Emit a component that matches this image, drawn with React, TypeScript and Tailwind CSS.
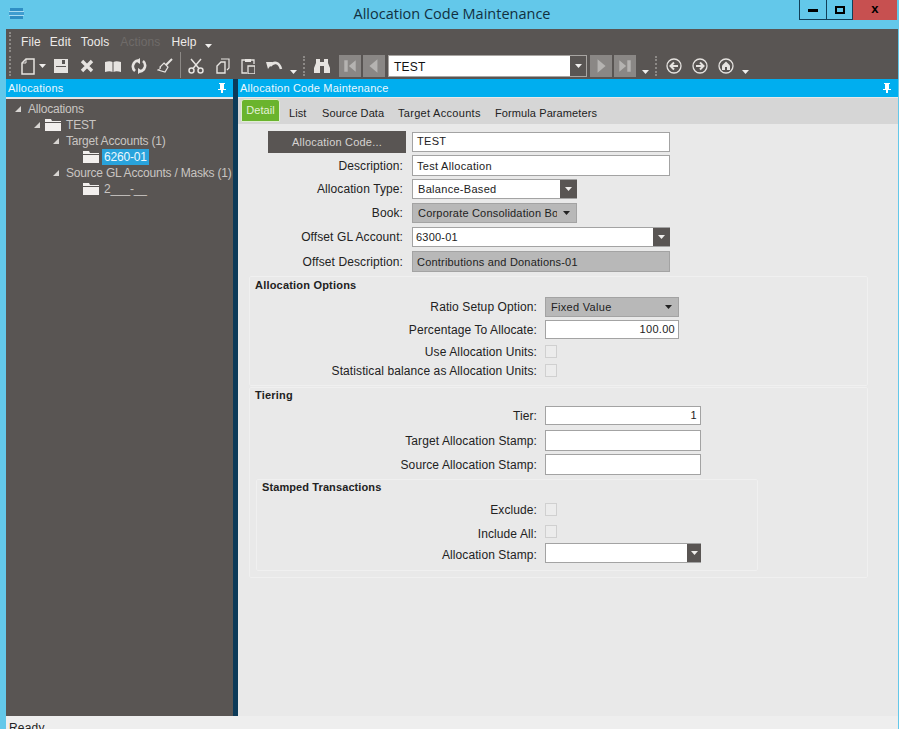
import React from 'react';

const Caret = ({ className = '' }: { className?: string }) => (
  <svg width="7" height="4" viewBox="0 0 7 4" className={className}>
    <path d="M0 0h7L3.5 4z" fill="#f0eeec" />
  </svg>
);

const Grip = ({ className = '' }: { className?: string }) => (
  <div className={`w-[2px] h-[20px] shrink-0 border-l-2 border-dotted border-[#8c8986] ${className}`} />
);

const Icon = ({ className = '', w = 16, h = 16, children }: { className?: string; w?: number; h?: number; children: React.ReactNode }) => (
  <svg width={w} height={h} viewBox={`0 0 ${w} ${h}`} fill="none" stroke="#e6e3e0" strokeWidth="1.5" className={`shrink-0 ${className}`}>
    {children}
  </svg>
);

const NavBtn = ({ className = '', children }: { className?: string; children: React.ReactNode }) => (
  <div className={`w-[22px] h-[22px] shrink-0 bg-[#8a8785] flex items-center justify-center ${className}`}>
    <svg width="16" height="16" viewBox="0 0 14 14" fill="#b5b3b1">{children}</svg>
  </div>
);

const Folder = ({ className = '' }: { className?: string }) => (
  <svg width="16" height="12" viewBox="0 0 16 12" className={`shrink-0 ${className}`}>
    <path d="M0 0h6l1 2h9v1H0z" fill="#f2efed" />
    <path d="M0 4h16v8H0z" fill="#f2efed" />
  </svg>
);

const Tri = ({ className = '' }: { className?: string }) => (
  <svg width="6" height="6" viewBox="0 0 6 6" className={`shrink-0 ${className}`}>
    <path d="M6 0v6H0z" fill="#d8d5d2" />
  </svg>
);

const Row = ({ className = '', label, labelW, labelClass = '', children }: { className?: string; label: string; labelW: string; labelClass?: string; children: React.ReactNode }) => (
  <div className={`flex items-center ${className}`}>
    <div className={`${labelW} shrink-0 text-right text-[#222] tracking-[0.1px] whitespace-nowrap ${labelClass}`}>{label}</div>
    {children}
  </div>
);

const TextBox = ({ className = '', value = '', right = false }: { className?: string; value?: string; right?: boolean }) => (
  <div className={`bg-white border border-[#a3a3a3] flex items-center px-[4px] text-[11px] tracking-[0.3px] text-[#222] ${right ? 'justify-end' : ''} ${className}`}>{value}</div>
);

const DarkDrop = ({ className = '' }: { className?: string }) => (
  <div className={`bg-[#595553] h-full flex items-center justify-center shrink-0 ${className}`}>
    <Caret />
  </div>
);

const Check = ({ className = '' }: { className?: string }) => (
  <div className={`w-[12px] h-[13px] ml-[8px] border border-[#d0d0d0] bg-[#ececec] ${className}`} />
);

export default function App() {
  return (
    <div className="h-[729px] w-[899px] overflow-hidden bg-[#63c8ea] flex flex-col font-['Liberation_Sans',Arial,sans-serif] text-[12px] tracking-[0.2px]">
      {/* title bar */}
      <div className="h-[29px] shrink-0 flex items-start relative">
        <svg width="15" height="11" viewBox="0 0 15 11" className="mt-[8px] ml-[9px]">
          <path d="M1 0h13v3H1z" fill="#2f8fc4" />
          <path d="M0 4h15v3H0z" fill="#3f9dd0" />
          <path d="M1 8h13v3H1z" fill="#2f8fc4" />
          <path d="M0 3.500h15M0 7.500h15" stroke="#a9dcf2" strokeWidth="1" />
        </svg>
        <div className="absolute inset-x-0 top-[5px] pl-[5px] text-center text-[14.5px] tracking-normal text-[#12303f] font-['Open_Sans',sans-serif] leading-[18px]">
          Allocation Code Maintenance
        </div>
        <div className="ml-auto mr-[2px] flex h-[20px] relative">
          <div className="w-[28px] border border-t-0 border-[#123f58] flex items-center justify-center">
            <div className="w-[10px] h-[3px] bg-black mt-[2px]" />
          </div>
          <div className="w-[26px] border-b border-r border-[#123f58] flex items-center justify-center">
            <div className="w-[10px] h-[8px] border-2 border-black" />
          </div>
          <div className="w-[44px] bg-[#c75050] flex items-center justify-center text-[13px] font-bold text-black leading-none pb-[3px]">x</div>
        </div>
      </div>

      <div className="flex-1 min-h-0 ml-[6px] mr-[1px] flex flex-col">
        {/* menu bar */}
        <div className="h-[24px] shrink-0 bg-[#595553] flex items-center text-[#eeebe9] pt-[2px] tracking-[0.1px]">
          <Grip className="ml-[3px]" />
          <span className="ml-[10px]">File</span>
          <span className="ml-[9px]">Edit</span>
          <span className="ml-[10px]">Tools</span>
          <span className="ml-[11px] text-[#6f6b69]">Actions</span>
          <span className="ml-[11px]">Help</span>
          <Caret className="ml-[8px] mt-[8px]" />
        </div>

        {/* toolbar */}
        <div className="h-[26px] shrink-0 bg-[#595553] flex items-center">
          <Grip className="ml-[3px]" />
          <Icon className="ml-[10px]" w={14} h={17}>
            <path d="M5 1h8v15H1V5z" />
            <path d="M5 1v4H1" strokeWidth="1" />
          </Icon>
          <Caret className="ml-[4px]" />
          <Icon className="ml-[7px]">
            <path d="M1 1h14v14H1z" fill="#e6e3e0" stroke="none" />
            <path d="M9 2h3v4H9z" fill="#595553" stroke="none" />
            <path d="M3 8h10v1H3z" fill="#595553" stroke="none" />
          </Icon>
          <Icon className="ml-[11px]" w={14} h={14}>
            <path d="M2 2l10 10M12 2L2 12" strokeWidth="3.4" />
          </Icon>
          <Icon className="ml-[11px]">
            <path d="M0 4c3-1 6-1 7.500 0v10C6 13 3 13 0 14zM16 4c-3-1-6-1-7.500 0v10c1.500-1 4.500-1 7.500 0z" fill="#e6e3e0" stroke="none" />
          </Icon>
          <Icon className="ml-[10px]">
            <path d="M7 2.500A6 6 0 0 0 4 13M9 13.500A6 6 0 0 0 12 3" strokeWidth="2.600" />
            <path d="M9 0v6L4.500 3zM7 10v6l4.500-3z" fill="#e6e3e0" stroke="none" />
          </Icon>
          <Icon className="ml-[10px]">
            <path d="M15 1L9 7" strokeWidth="2" />
            <path d="M7 5l4 4-3 5-7-2c2-1 3-2 2-3z" strokeWidth="1.200" />
          </Icon>
          <div className="w-[1px] h-[26px] bg-[#8c8986] ml-[7px] mb-[2px]" />
          <Icon className="ml-[7px]">
            <circle cx="3.500" cy="12.500" r="2.500" />
            <circle cx="12.500" cy="12.500" r="2.500" />
            <path d="M5 10.500L13 1M11 10.500L3 1" />
          </Icon>
          <Icon className="ml-[12px]" w={14} h={16}>
            <path d="M5 1h8v9l-2 2" strokeWidth="1.200" />
            <path d="M5 4h4v11H1V8z" strokeWidth="1.400" />
          </Icon>
          <Icon className="ml-[11px]" w={14} h={16}>
            <path d="M4 2H1v13h5M10 2h3v4" strokeWidth="1.300" />
            <path d="M4 1h6v3H4z" fill="#e6e3e0" stroke="none" />
            <path d="M7 8h7v8H7z" strokeWidth="1.300" />
          </Icon>
          <Icon className="ml-[11px]" w={17} h={12}>
            <path d="M4 6c4-5 9-4 11 3" strokeWidth="2.600" />
            <path d="M0 2l7 0-5 7z" fill="#e6e3e0" stroke="none" />
          </Icon>
          <Caret className="ml-[7px] mt-[11px]" />
          <Grip className="ml-[6px]" />
          <Icon className="ml-[9px]" w={16} h={14}>
            <path d="M2 0h4v3h4V0h4v4l2 5v5h-6V7H6v7H0V9l2-5z" fill="#e6e3e0" stroke="none" />
          </Icon>
          <NavBtn className="ml-[9px]">
            <path d="M2 2h3v10H2zM12 2v10L6 7z" />
          </NavBtn>
          <NavBtn className="ml-[2px]">
            <path d="M10 1v12L3 7z" />
          </NavBtn>
          <div className="ml-[3px] h-[22px] w-[199px] shrink-0 border border-[#a8a5a2] flex items-center">
            <div className="flex-1 h-full bg-white text-[#111] flex items-center pl-[5px] pt-[1px]">TEST</div>
            <DarkDrop className="w-[16px]" />
          </div>
          <NavBtn className="ml-[3px]">
            <path d="M4 1v12l7-6z" />
          </NavBtn>
          <NavBtn className="ml-[2px]">
            <path d="M2 2v10l6-5zM9 2h3v10H9z" />
          </NavBtn>
          <Caret className="ml-[6px] mt-[11px]" />
          <Grip className="ml-[6px]" />
          <Icon className="ml-[9px]">
            <circle cx="8" cy="8" r="7" strokeWidth="1.300" />
            <path d="M12 8H5M8 4.500L4.500 8 8 11.500" strokeWidth="2" />
          </Icon>
          <Icon className="ml-[10px]">
            <circle cx="8" cy="8" r="7" strokeWidth="1.300" />
            <path d="M4 8h7M8 4.500L11.500 8 8 11.500" strokeWidth="2" />
          </Icon>
          <Icon className="ml-[10px]">
            <circle cx="8" cy="8" r="7" strokeWidth="1.300" />
            <path d="M8 3.500L12 7.500v4.500H4V7.500z" fill="#e6e3e0" stroke="none" />
            <path d="M7 9h2v3H7z" fill="#595553" stroke="none" />
          </Icon>
          <Caret className="ml-[8px] mt-[11px]" />
        </div>

        {/* panes */}
        <div className="flex-1 min-h-0 flex">
          <div className="w-[227px] shrink-0 flex flex-col">
            <div className="h-[18px] shrink-0 bg-[#00aeef] flex items-center text-[11px] text-[#eaf7fd] pl-[2px] pr-[7px]">
              <span>Allocations</span>
              <svg width="8" height="10" viewBox="0 0 8 10" className="ml-auto">
                <path d="M1 0h6v1H6v5h2v1H5v3H3V7H0V6h2V1H1z" fill="#fff" />
              </svg>
            </div>
            <div className="flex-1 bg-[#595553] border-t-2 border-[#e4e4e4] pt-[2px] text-[#c9c5c2] tracking-[-0.2px] whitespace-nowrap">
              <div className="h-[16px] flex items-center"><Tri className="ml-[9px]" /><span className="ml-[7px]">Allocations</span></div>
              <div className="h-[16px] flex items-center"><Tri className="ml-[28px]" /><Folder className="ml-[5px]" /><span className="ml-[5px]">TEST</span></div>
              <div className="h-[16px] flex items-center"><Tri className="ml-[47px]" /><span className="ml-[7px]">Target Accounts (1)</span></div>
              <div className="h-[16px] flex items-center">
                <Folder className="ml-[77px]" />
                <span className="ml-[3px] px-[2px] bg-[#29a3dc] text-[#eef8fc] leading-[16px]">6260-01</span>
              </div>
              <div className="h-[16px] flex items-center"><Tri className="ml-[47px]" /><span className="ml-[7px]">Source GL Accounts / Masks (1)</span></div>
              <div className="h-[16px] flex items-center"><Folder className="ml-[77px]" /><span className="ml-[5px]">2___-__</span></div>
            </div>
          </div>

          <div className="w-[5px] shrink-0 bg-[#0c3a58]" />

          <div className="flex-1 min-w-0 flex flex-col">
            <div className="h-[18px] shrink-0 bg-[#00aeef] flex items-center text-[11px] text-[#eaf7fd] pl-[2px] pr-[7px]">
              <span>Allocation Code Maintenance</span>
              <svg width="8" height="10" viewBox="0 0 8 10" className="ml-auto">
                <path d="M1 0h6v1H6v5h2v1H5v3H3V7H0V6h2V1H1z" fill="#fff" />
              </svg>
            </div>

            {/* tabs */}
            <div className="h-[27px] shrink-0 bg-[#d6d6d6] border-t border-[#e8e8e8] flex items-start text-[11px] tracking-[0.1px] text-[#222]">
              <div className="ml-[3px] mt-[1px] h-[23px] w-[39px] bg-[#6ab42d] border border-[#dfeed2] rounded-t-[3px] flex items-center justify-center text-[#e4f1d8]">Detail</div>
              <div className="ml-[9px] mt-[7px] w-[33px]">List</div>
              <div className="mt-[7px] w-[76px]">Source Data</div>
              <div className="mt-[7px] w-[97px] tracking-[0.3px]">Target Accounts</div>
              <div className="mt-[7px]">Formula Parameters</div>
            </div>

            {/* form */}
            <div className="flex-1 min-h-0 bg-[#e9e9e9] pt-[7px]">
              <div className="flex items-center h-[21px]">
                <div className="ml-[30px] w-[138px] h-[22px] pt-[1px] bg-[#595553] text-[11px] text-[#d6d3d1] flex items-center justify-center">Allocation Code...</div>
                <TextBox className="ml-[6px] w-[258px] h-[20px]" value="TEST" />
              </div>
              <Row className="h-[21px] mt-[3px]" labelW="w-[165px]" label="Description:">
                <TextBox className="ml-[9px] w-[258px] h-[21px] pt-[1px]" value="Test Allocation" />
              </Row>
              <Row className="h-[20px] mt-[3px]" labelW="w-[165px]" label="Allocation Type:">
                <div className="ml-[9px] w-[165px] h-[20px] bg-white border-l border-y border-[#a3a3a3] flex items-center text-[11px] tracking-[0.3px]">
                  <span className="flex-1 pl-[5px] text-[#222]">Balance-Based</span>
                  <DarkDrop className="w-[17px]" />
                </div>
              </Row>
              <Row className="h-[20px] mt-[4px]" labelW="w-[165px]" label="Book:">
                <div className="ml-[9px] w-[165px] h-[20px] bg-[#b8b8b8] border border-[#a3a3a3] flex items-center pl-[5px] pr-[6px] text-[11px] tracking-[0.2px] text-[#222]">
                  <span className="w-[139px] overflow-hidden whitespace-nowrap">Corporate Consolidation Book</span>
                  <svg width="7" height="4" viewBox="0 0 7 4" className="ml-auto"><path d="M0 0h7L3.500 4z" fill="#222" /></svg>
                </div>
              </Row>
              <Row className="h-[20px] mt-[4px]" labelW="w-[165px]" label="Offset GL Account:">
                <div className="ml-[9px] w-[258px] h-[20px] bg-white border-l border-y border-[#a3a3a3] flex items-center text-[11px] tracking-[0.2px]">
                  <span className="flex-1 pl-[3px] text-[#222]">6300-01</span>
                  <DarkDrop className="w-[17px]" />
                </div>
              </Row>
              <Row className="h-[21px] mt-[4px]" labelW="w-[165px]" label="Offset Description:">
                <div className="ml-[9px] w-[258px] h-[21px] pt-[1px] bg-[#b8b8b8] border border-[#a3a3a3] flex items-center pl-[4px] text-[11px] text-[#222]">Contributions and Donations-01</div>
              </Row>

              {/* allocation options */}
              <div className="mt-[4px] ml-[11px] w-[619px] h-[110px] border border-[#f0f0f0] rounded-[2px]">
                <div className="h-[17px] flex items-center pl-[5px] font-bold text-[11px] text-[#222]">Allocation Options</div>
                <Row className="h-[20px] mt-[3px]" labelW="w-[287px]" label="Ratio Setup Option:">
                  <div className="ml-[8px] w-[134px] h-[20px] bg-[#b8b8b8] border border-[#a3a3a3] flex items-center pl-[5px] pr-[6px] text-[11px] tracking-[0.3px] text-[#222]">
                    <span>Fixed Value</span>
                    <svg width="7" height="4" viewBox="0 0 7 4" className="ml-auto"><path d="M0 0h7L3.500 4z" fill="#222" /></svg>
                  </div>
                </Row>
                <Row className="h-[19px] mt-[3px]" labelW="w-[287px]" label="Percentage To Allocate:">
                  <TextBox className="ml-[8px] w-[134px] h-[19px] !px-[3px]" value="100.00" right />
                </Row>
                <Row className="h-[13px] mt-[6px]" labelW="w-[287px]" label="Use Allocation Units:"><Check /></Row>
                <Row className="h-[13px] mt-[6px]" labelW="w-[287px]" label="Statistical balance as Allocation Units:"><Check /></Row>
              </div>

              {/* tiering */}
              <div className="mt-[1px] ml-[11px] w-[619px] h-[191px] border border-[#f0f0f0] rounded-[2px]">
                <div className="h-[15px] flex items-center pl-[5px] font-bold text-[11px] text-[#222]">Tiering</div>
                <Row className="h-[19px] mt-[3px]" labelW="w-[287px]" label="Tier:">
                  <TextBox className="ml-[8px] w-[156px] h-[19px] !px-[3px]" value="1" right />
                </Row>
                <Row className="h-[21px] mt-[5px]" labelW="w-[287px]" label="Target Allocation Stamp:">
                  <TextBox className="ml-[8px] w-[156px] h-[21px]" />
                </Row>
                <Row className="h-[21px] mt-[3px]" labelW="w-[287px]" label="Source Allocation Stamp:">
                  <TextBox className="ml-[8px] w-[156px] h-[21px]" />
                </Row>

                {/* stamped transactions */}
                <div className="mt-[4px] ml-[6px] w-[502px] h-[92px] border border-[#f0f0f0] rounded-[2px]">
                  <div className="h-[15px] flex items-center pl-[5px] font-bold text-[11px] tracking-[0.1px] text-[#222]">Stamped Transactions</div>
                  <Row className="h-[13px] mt-[8px]" labelW="w-[280px]" label="Exclude:"><Check /></Row>
                  <Row className="h-[13px] mt-[9px]" labelW="w-[280px]" labelClass="pt-[4px]" label="Include All:"><Check /></Row>
                  <Row className="h-[20px] mt-[5px]" labelW="w-[280px]" labelClass="pt-[3px]" label="Allocation Stamp:">
                    <div className="ml-[8px] w-[156px] h-[20px] bg-white border-l border-y border-[#a3a3a3] flex items-center justify-end">
                      <DarkDrop className="w-[14px]" />
                    </div>
                  </Row>
                </div>
              </div>
            </div>
          </div>
        </div>

        {/* status bar */}
        <div className="h-[13px] shrink-0 bg-[#eeeeee] pl-[3px] pt-[5px] text-[#222] leading-[14px] overflow-hidden">Ready</div>
      </div>
    </div>
  );
}
